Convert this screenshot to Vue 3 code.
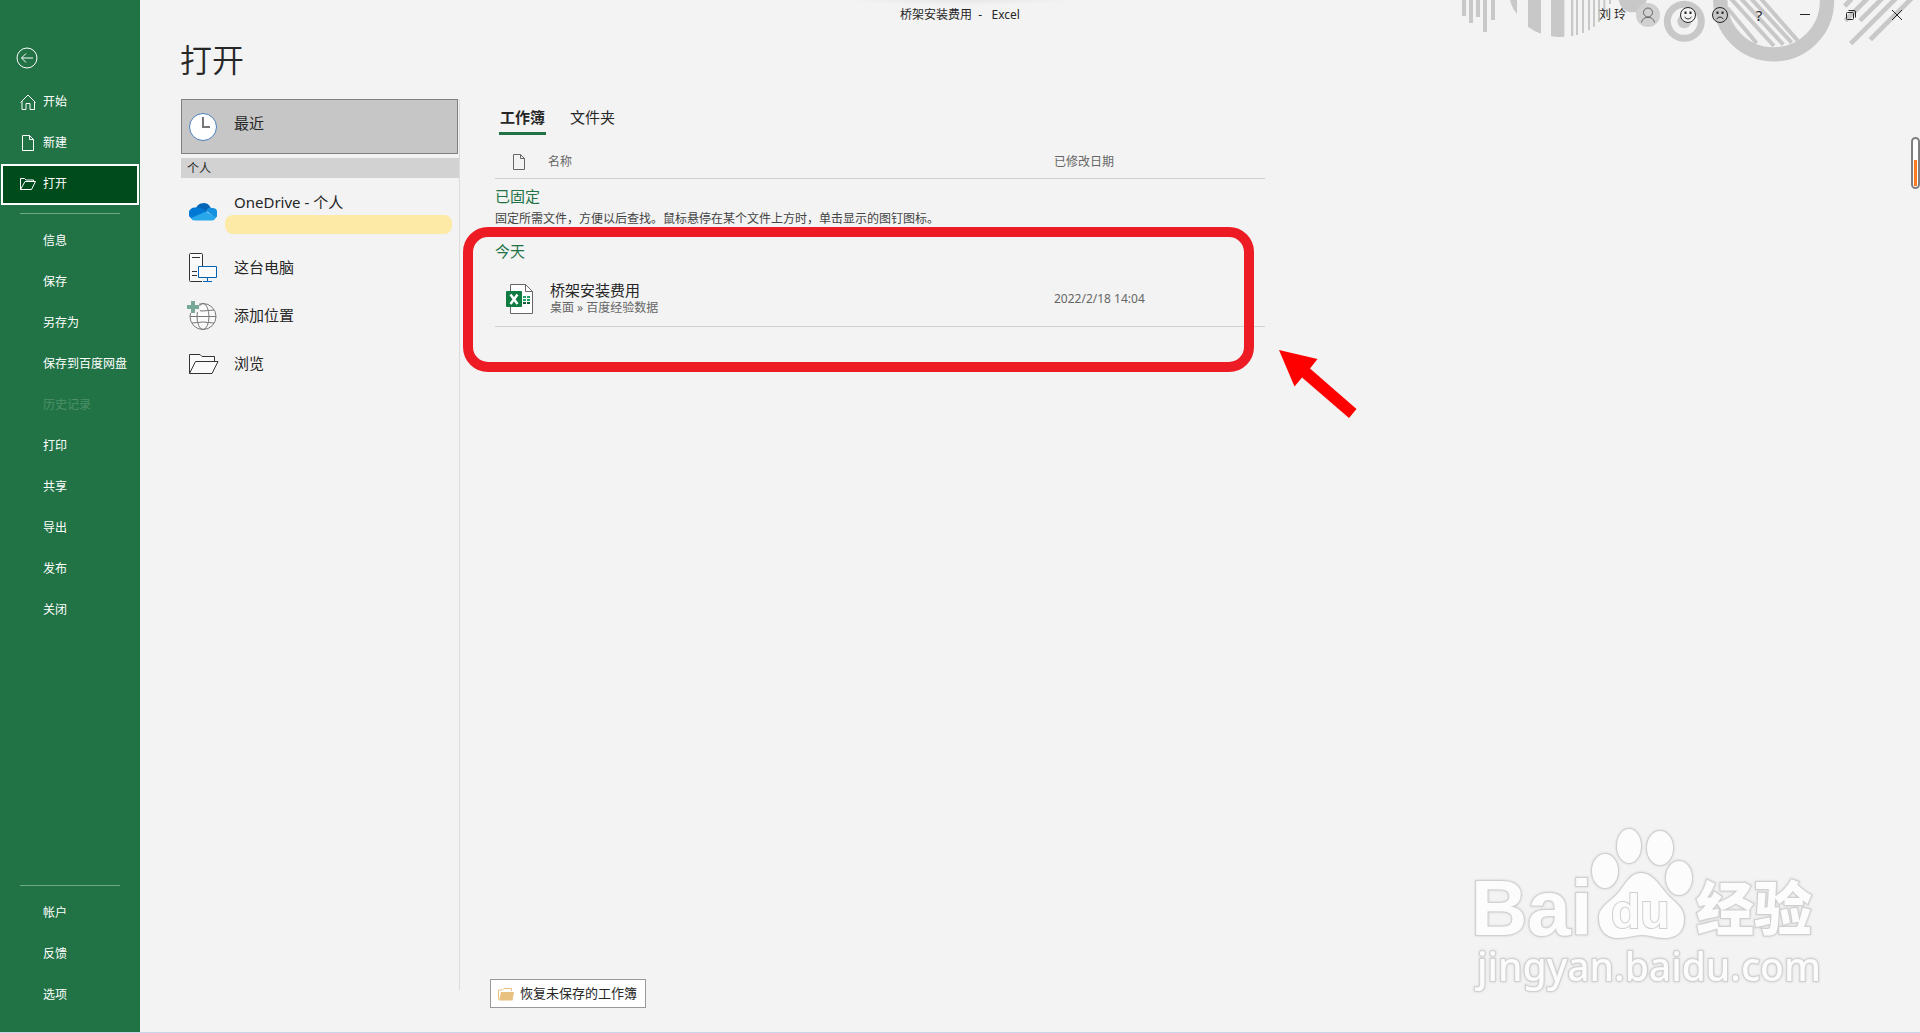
<script setup>
import { ref } from "vue";

const topMenu = [
  { name: "开始", icon: "home" },
  { name: "新建", icon: "file" },
  { name: "打开", icon: "folder" },
];

const menu = [
  { name: "信息" },
  { name: "保存" },
  { name: "另存为" },
  { name: "保存到百度网盘" },
  { name: "历史记录", disabled: true },
  { name: "打印" },
  { name: "共享" },
  { name: "导出" },
  { name: "发布" },
  { name: "关闭" },
];

const bottomMenu = [{ name: "帐户" }, { name: "反馈" }, { name: "选项" }];

const tabs = ["工作簿", "文件夹"];

const files = ref([
  {
    key: 0,
    name: "桥架安装费用",
    path: "桌面 » 百度经验数据",
    date: "2022/2/18 14:04",
  },
]);

const activeMenu = ref("打开");
const activeTab = ref("工作簿");
</script>

<template>
  <div class="backstage">
    <nav class="sidebar">
      <button class="back" aria-label="返回">
        <svg width="22" height="22" viewBox="0 0 22 22">
          <circle cx="11" cy="11" r="10" />
          <path d="M17 11H5.5M10 6.500L5.500 11l4.500 4.500" />
        </svg>
      </button>

      <button
        v-for="item in topMenu"
        :key="item.name"
        class="item"
        :class="{ active: activeMenu === item.name }"
        @click="activeMenu = item.name"
      >
        <svg width="16" height="16" viewBox="0 0 16 16">
          <path v-if="item.icon === 'home'" d="M.5 8.500L8 1l7.500 7.500M2 7v8.500h4V9.500h4v6h4.500V7" />
          <path v-else-if="item.icon === 'file'" d="M2.500.5h7l4 4v11h-11zM9.500.5v4h4" />
          <path v-else d="M.5 13.500v-11h4l1.500 1.500h7.500v1.500M.5 13.500L5 5.500h10.500l-4 8z" />
        </svg>
        <span>{{ item.name }}</span>
      </button>

      <hr />

      <button
        v-for="item in menu"
        :key="item.name"
        class="item text-only"
        :disabled="item.disabled"
      >
        {{ item.name }}
      </button>

      <hr class="push" />

      <button v-for="item in bottomMenu" :key="item.name" class="item text-only">
        {{ item.name }}
      </button>
    </nav>

    <main class="main">
      <!-- decoration behind the window buttons -->
      <svg class="art" width="480" height="80" viewBox="0 0 1440 240">
        <g fill="#c8c8c8">
          <path d="M66 0h12v48H66zM87 0h12v69H87zM108 0h12v51h-12zM129 0h12v96h-12zM153 0h12v60h-12z" />
          <path d="M210 0h21v42Q216 24 210 0zM264 0h39v101Q282 94 264 80zM333 0h40v110q-20 3-40-1z" />
          <path d="M393 0h7v108h-7zM408 0h6v105h-6zM426 0h6v99h-6zM444 0h6v91h-6zM459 0h6v80h-6zM474 0h6v66h-6zM490 0h6v48h-6zM507 0h6v12h-6z" />
          <path d="M536 0h84q-8 37-42 37T536 0z" />
          <circle cx="733" cy="64" r="21" />
        </g>
        <g fill="none" stroke="#c8c8c8">
          <circle cx="733" cy="64" r="51" stroke-width="21" />
          <circle cx="1001" cy="3" r="160" stroke-width="43" />
          <path
            d="M862 24l88 106M862-16l140 154M885-24l145 158M915-24l140 152M945-24l128 146"
            stroke-width="12"
          />
          <path
            d="M1214 18l22-22M1216 62l70-70M1260 62l72-72M1232 131l138-138M1291 119l126-126"
            stroke-width="14"
          />
        </g>
      </svg>

      <header class="titlebar">
        <span class="caption">桥架安装费用 &nbsp;-&nbsp;&nbsp; Excel</span>
        <div class="tools">
          <span class="user">刘 玲</span>
          <button class="avatar" aria-label="账户">
            <svg width="24" height="24" viewBox="0 0 24 24">
              <circle cx="12" cy="9.500" r="4.500" />
              <path d="M5.500 19.500c1-7 12-7 13 0" />
            </svg>
          </button>
          <button class="face" aria-label="笑脸">
            <svg width="18" height="18" viewBox="0 0 18 18">
              <circle cx="9" cy="9" r="7.500" />
              <path d="M5.500 11q3.500 4 7 0" />
              <path d="M6.500 5.500v2.500M11.500 5.500v2.500" stroke-width="2" />
            </svg>
          </button>
          <button class="face sad" aria-label="哭脸">
            <svg width="18" height="18" viewBox="0 0 18 18">
              <circle cx="9" cy="9" r="7.500" />
              <path d="M5.500 13q3.500-4 7 0" />
              <path d="M6.500 5.500v2.500M11.500 5.500v2.500" stroke-width="2" />
            </svg>
          </button>
          <button class="help" aria-label="帮助">?</button>
          <button class="win" aria-label="最小化">
            <svg width="12" height="12" viewBox="0 0 12 12"><path d="M1 5.500h10" /></svg>
          </button>
          <button class="win" aria-label="还原">
            <svg width="12" height="12" viewBox="0 0 12 12">
              <rect x="1.500" y="3.500" width="7" height="7" rx="1" />
              <path d="M3.500 1.500h5.500q1.500 0 1.500 1.500v5.500" />
            </svg>
          </button>
          <button class="win" aria-label="关闭">
            <svg width="12" height="12" viewBox="0 0 12 12"><path d="M1 1l10 10M11 1L1 11" /></svg>
          </button>
        </div>
      </header>

      <h1>打开</h1>

      <div class="content">
        <section class="places">
          <button class="place recent">
            <svg width="28" height="28" viewBox="0 0 28 28">
              <circle cx="14" cy="14" r="13.500" fill="#fff" stroke="#4a7ebb" />
              <path d="M14 4v10h7" fill="none" stroke="#777" stroke-width="2" />
            </svg>
            <span>最近</span>
          </button>
          <h2>个人</h2>
          <button class="place onedrive">
            <svg width="28" height="28" viewBox="0 0 28 28">
              <path d="M7 11a8 8 0 0 1 14.500-.5L18 15z" fill="#0364b8" />
              <path d="M5 22.500a6 6 0 0 1 1.500-12Q10 9 17 14l2 5z" fill="#0078d4" />
              <path d="M17 13.500q3-4 6-2.500a5.500 5.500 0 0 1 3.500 10z" fill="#1490df" />
              <path d="M2 21l15-6.500 10 6q-1.500 3-4 3H6q-3 0-4-2.500z" fill="#28a8ea" />
            </svg>
            <span class="account">
              <span>OneDrive - 个人</span>
              <span class="mask"></span>
            </span>
          </button>
          <button class="place">
            <svg width="28" height="30" viewBox="0 0 28 30" fill="#fafafa">
              <path d="M13 28.500H1.500q-1 0-1-1v-26q0-1 1-1h11q1 0 1 1V13" stroke="#333" />
              <path d="M3 4.500h8M3 18.500h5M3 22.500h5" stroke="#333" />
              <path d="M9.500 13.500h18v11h-18zM18.500 25v3M14 28.500h9" stroke="#0063b1" />
            </svg>
            <span>这台电脑</span>
          </button>
          <button class="place">
            <svg class="globe" width="28" height="30" viewBox="0 0 28 30" fill="none">
              <circle cx="14" cy="15.500" r="13" fill="#fafafa" stroke="#777" />
              <ellipse cx="14" cy="15.500" rx="6" ry="13" stroke="#777" />
              <path d="M1 15.500h26M3 9q11 2 22 0M3 22q11-2 22 0" stroke="#777" />
              <path d="M-2 0h12v5h1v6H5v1h-7z" fill="#f3f3f3" />
              <path d="M-2 6H10M4 0v12" stroke="#78a898" stroke-width="4" />
            </svg>
            <span>添加位置</span>
          </button>
          <button class="place">
            <svg class="wide" width="30" height="22" viewBox="0 0 30 22" fill="#fafafa" stroke="#333">
              <path d="M.5 20.500V1.500H11l2 2h12.500v5" />
              <path d="M.5 20.500l6-12H29l-6 12z" />
            </svg>
            <span>浏览</span>
          </button>
        </section>

        <section class="docs">
          <div class="tabs">
            <button
              v-for="tab in tabs"
              :key="tab"
              :class="{ active: activeTab === tab }"
              @click="activeTab = tab"
            >
              {{ tab }}
            </button>
          </div>

          <table>
            <thead>
              <tr>
                <th class="icon-col">
                  <svg width="12" height="16" viewBox="0 0 12 16" fill="none" stroke="#666">
                    <path d="M.5.5h7l4 4v11H.5zM7.500.5v4h4" />
                  </svg>
                </th>
                <th>名称</th>
                <th class="date-col">已修改日期</th>
              </tr>
            </thead>
            <tbody>
              <tr>
                <td class="group" colspan="3">已固定</td>
              </tr>
              <tr>
                <td class="hint" colspan="3">
                  固定所需文件，方便以后查找。鼠标悬停在某个文件上方时，单击显示的图钉图标。
                </td>
              </tr>
            </tbody>
            <tbody>
              <tr>
                <td class="group" colspan="3">今天</td>
              </tr>
              <tr v-for="file in files" :key="file.key" class="file">
                <td class="icon-col">
                  <svg width="28" height="30" viewBox="0 0 28 30">
                    <path d="M4.500.5h15l7 7v22h-22z" fill="#fff" stroke="#666" />
                    <path d="M19.500.5v7h7" fill="none" stroke="#666" />
                    <path d="M17 12h3v2h-3zM21 12h3v2h-3zM17 15h3v2h-3zM21 15h3v2h-3z" fill="#21a366" />
                    <path d="M17 18h3v2h-3zM21 18h3v2h-3z" fill="#185c37" />
                    <rect y="7" width="16" height="16" rx="1" fill="#107c41" />
                    <path d="M4.500 10.500l7 9.500M11.500 10.500l-7 9.500" stroke="#fff" stroke-width="2.500" />
                  </svg>
                </td>
                <td>
                  <div class="name">{{ file.name }}</div>
                  <div class="path">{{ file.path }}</div>
                </td>
                <td class="date">{{ file.date }}</td>
              </tr>
            </tbody>
          </table>

          <button class="recover">
            <svg width="16" height="14" viewBox="0 0 16 14">
              <path d="M.5 12.500V3h4L6 1.500h7.500V4" fill="none" stroke="#e8c080" />
              <path d="M1 13.500L3 5h13l-1.500 8.500z" fill="#e8c080" />
            </svg>
            <span>恢复未保存的工作簿</span>
          </button>

          <div class="frame"></div>
          <svg class="arrow" width="78" height="68" viewBox="0 0 78 68">
            <path d="M0 0L38.500 9 31 18.500 77.500 59 70 68 23 27.500 15.500 36.500z" fill="#f00" />
          </svg>
        </section>
      </div>

      <div class="meter"></div>

      <svg class="watermark" width="380" height="180" viewBox="0 0 380 180">
        <text class="latin" x="6" y="115">Bai</text>
        <ellipse cx="164" cy="26" rx="12" ry="17" />
        <ellipse cx="195" cy="28" rx="13" ry="17" />
        <ellipse cx="140" cy="51" rx="13" ry="17" />
        <ellipse cx="214" cy="58" rx="13" ry="17" />
        <path
          d="M176 53C186 53 192 62 200 72 208 82 219 86 219 99 219 112 211 118 200 118 190 118 186 115 177 115 168 115 164 118 153 118 141 118 134 110 134 98 134 86 146 82 154 72 162 62 166 53 176 53z"
        />
        <text class="du" x="146" y="108">du</text>
        <text class="hanzi" x="231" y="110">经验</text>
        <text class="url" x="12" y="161">jingyan.baidu.com</text>
      </svg>
    </main>
  </div>
</template>

<style>
body {
  margin: 0;
  background-color: #f3f3f3;
}
</style>

<style scoped>
.backstage {
  display: flex;
  min-height: 100vh;
  box-sizing: border-box;
  border-bottom: 1px solid #c8d8ea;
  font-family: "Noto Sans", "Noto Sans CJK SC", sans-serif;
  font-size: 12px;
  line-height: 20px;
  color: #262626;
  background-color: #f3f3f3;
}

button {
  padding: 0;
  border: none;
  background: none;
  font: inherit;
  color: inherit;
  text-align: left;
}

svg {
  display: block;
  flex-shrink: 0;
}

.sidebar {
  flex: 0 0 140px;
  display: flex;
  flex-direction: column;
  box-sizing: border-box;
  padding: 47px 1px 16px;
  color: #fff;
  background-color: #217346;
}

.sidebar svg {
  fill: none;
  stroke: #fff;
}

.back {
  align-self: flex-start;
  margin: 0 0 13px 15px;
}

.item {
  display: flex;
  align-items: center;
  gap: 7px;
  flex-shrink: 0;
  height: 41px;
  box-sizing: border-box;
  padding: 0 0 2px 17px;
  border: 2px solid transparent;
  white-space: nowrap;
}

.item.active {
  border-color: #fff;
  background-color: #004b1c;
}

.text-only {
  padding-left: 40px;
}

.item:disabled {
  color: #4d9068;
}

hr {
  width: 100px;
  height: 1px;
  margin: 8px 19px 7px;
  border: none;
  background-color: #6cab84;
}

.push {
  margin-top: auto;
}

.main {
  position: relative;
  flex: 1;
  min-width: 0;
  display: flex;
  flex-direction: column;
}

.art {
  position: absolute;
  top: 0;
  right: 0;
}

.titlebar {
  position: relative;
  display: flex;
  justify-content: flex-end;
  height: 30px;
}

.caption {
  position: absolute;
  top: 0;
  left: -140px;
  right: 0;
  line-height: 30px;
  text-align: center;
  background: radial-gradient(ellipse 120px 5px at 50% 0, #e6e6e6, transparent);
}

.tools {
  position: relative;
  display: flex;
  align-items: center;
  padding-right: 17px;
}

.user {
  margin-right: 10px;
}

.avatar {
  margin-right: 19px;
  border-radius: 50%;
  background-color: #d0d0d0;
}

.tools svg {
  fill: none;
  stroke: #262626;
}

.tools .avatar svg {
  stroke: #666;
}

.face {
  margin-right: 14px;
}

.tools .face circle {
  fill: #f3f3f3;
}

.tools .sad circle {
  fill: #c8c8c8;
}

.help {
  width: 24px;
  margin: 0 28px 0 4px;
  font-size: 15px;
  text-align: center;
}

.win + .win {
  margin-left: 34px;
}

h1 {
  margin: 10px 0 19px 40px;
  font-size: 32px;
  font-weight: 350;
  line-height: 40px;
}

.content {
  flex: 1;
  display: flex;
  padding-left: 41px;
}

.places {
  flex: 0 0 278px;
  margin-bottom: 42px;
  border-right: 1px solid #dcdcdc;
}

.place {
  display: flex;
  align-items: center;
  gap: 17px;
  width: 100%;
  height: 48px;
  padding-left: 8px;
  font-size: 15px;
}

.place > span {
  padding-bottom: 2px;
}

.place .globe {
  overflow: visible;
}

.place .wide {
  margin-right: -2px;
}

.recent {
  width: 277px;
  height: 55px;
  box-sizing: border-box;
  padding-left: 7px;
  border: 1px solid #808080;
  background-color: #c6c6c6;
}

.recent > span {
  padding-bottom: 7px;
}

h2 {
  margin: 4px 0 0;
  padding: 2px 0 0 6px;
  font-size: 12px;
  font-weight: 400;
  line-height: 18px;
  background-color: #d2d2d2;
}

.onedrive {
  height: 66px;
  gap: 8px;
}

.onedrive .account {
  display: flex;
  flex-direction: column;
  padding: 2px 0 0;
  line-height: 24px;
}

.account span:first-child {
  padding: 0 0 1px 9px;
}

.mask {
  width: 227px;
  height: 19px;
  border-radius: 8px;
  background-color: #fdeaa6;
}

.docs {
  position: relative;
  flex: 0 1 775px;
  display: flex;
  flex-direction: column;
  align-items: flex-start;
  margin-left: 30px;
  padding-bottom: 24px;
}

.tabs {
  display: flex;
  gap: 23px;
  margin: 0 0 11px 9px;
}

.tabs button {
  height: 36px;
  box-sizing: border-box;
  padding: 2px 1px 0;
  border-bottom: 3px solid transparent;
  font-size: 15px;
}

.tabs .active {
  border-color: #217346;
  font-weight: 700;
}

table {
  align-self: stretch;
  margin-left: 5px;
  border-collapse: separate;
  border-spacing: 0;
  table-layout: fixed;
}

th {
  height: 33px;
  box-sizing: border-box;
  padding: 0;
  border-bottom: 1px solid #d0d0d0;
  font-weight: 400;
  text-align: left;
  color: #666;
}

td {
  padding: 0;
}

.icon-col {
  width: 53px;
}

th.icon-col svg {
  margin-left: 18px;
}

.date-col {
  width: 211px;
}

.group {
  height: 30px;
  box-sizing: border-box;
  padding-top: 4px;
  font-size: 15px;
  color: #217346;
}

.hint {
  height: 25px;
  vertical-align: top;
  color: #444;
}

.file td {
  height: 63px;
  box-sizing: border-box;
  padding-top: 7px;
  border-bottom: 1px solid #d0d0d0;
}

.file svg {
  margin-left: 11px;
}

.name,
.path {
  padding-left: 2px;
  line-height: 18px;
}

.name {
  font-size: 15px;
}

.path {
  color: #666;
}

.file .date {
  color: #666;
}

.recover {
  display: flex;
  align-items: center;
  gap: 6px;
  height: 29px;
  box-sizing: border-box;
  margin-top: auto;
  padding: 0 8px 0 7px;
  border: 1px solid #999;
  font-size: 13px;
  background-color: #fff;
}

.recover span {
  padding-bottom: 2px;
}

.frame {
  position: absolute;
  top: 128px;
  left: -27px;
  right: 11px;
  height: 145px;
  box-sizing: border-box;
  border: 10px solid #ed1c24;
  border-radius: 25px;
  pointer-events: none;
}

.arrow {
  position: absolute;
  top: 251px;
  left: 789px;
}

.meter {
  position: absolute;
  top: 137px;
  right: 0;
  width: 9px;
  height: 52px;
  box-sizing: border-box;
  border: 2px solid #7f7f7f;
  border-radius: 5px;
  background: linear-gradient(#ff7a20, #ff7a20) 1px 21px / 3px 26px no-repeat #fff;
}

.watermark {
  position: absolute;
  right: 75px;
  bottom: 32px;
  fill: #fcfcfc;
  stroke: #d0d0d0;
  stroke-width: 2px;
  paint-order: stroke;
  filter: drop-shadow(0 0 1px #ccc);
}

.latin {
  font: 700 78px "Liberation Sans", sans-serif;
}

.du {
  font: 700 48px "Liberation Sans", sans-serif;
}

.hanzi {
  font: 900 58px "Noto Sans CJK SC", sans-serif;
}

.url {
  font: 500 39px "Noto Sans", sans-serif;
}
</style>
